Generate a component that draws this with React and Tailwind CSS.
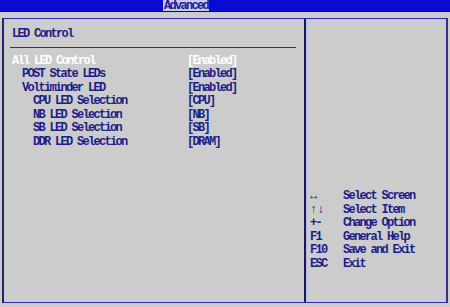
import React from 'react';

const items = [
  { label: 'All LED Control', value: '[Enabled]', indent: 'pl-[8px]', active: true },
  { label: 'POST State LEDs', value: '[Enabled]', indent: 'pl-[18px]' },
  { label: 'Voltiminder LED', value: '[Enabled]', indent: 'pl-[18px]' },
  { label: 'CPU LED Selection', value: '[CPU]', indent: 'pl-[29px]' },
  { label: 'NB LED Selection', value: '[NB]', indent: 'pl-[29px]' },
  { label: 'SB LED Selection', value: '[SB]', indent: 'pl-[29px]' },
  { label: 'DDR LED Selection', value: '[DRAM]', indent: 'pl-[29px]' },
];

const help = [
  ['↔', 'Select Screen', true],
  ['↑↓', 'Select Item', true],
  ['+-', 'Change Option'],
  ['F1', 'General Help'],
  ['F10', 'Save and Exit'],
  ['ESC', 'Exit'],
];

export default function App() {
  return (
    <div
      className="w-[450px] h-[307px] bg-[#cccccc] text-[#1c1c88] font-bold text-[12px] tracking-[-1.7px] leading-[13.5px] overflow-hidden"
      style={{ fontFamily: '"Liberation Mono", "DejaVu Sans Mono", monospace' }}
    >
      {/* top menu bar */}
      <div className="h-[12px] bg-[#0a0ad2] border-b border-[#06067a] flex">
        <div className="ml-[163px] w-[46px] h-full bg-[#c8c8f8] text-[#1a1a90] leading-[12px] pl-[1px]">
          Advanced
        </div>
      </div>

      {/* main frame */}
      <div className="mx-[2px] mt-[6px] h-[285px] border border-[#2a2ab0] border-l-2 border-l-[#202070] border-r-2 border-r-[#3030a0] flex">
        {/* left panel */}
        <div className="w-[302px] flex flex-col border-r-2 border-r-[#1a1a50]">
          <div className="pt-[9px] pl-[8px]">LED Control</div>
          <div className="mt-[5px] ml-[6px] mr-[8px] h-[1px] bg-[#2626c8]" />
          <div className="mt-[7px] flex flex-col">
            {items.map((it) => (
              <div key={it.label} className="flex">
                <div className={`w-[183px] ${it.indent} ${it.active ? 'text-white' : ''}`}>{it.label}</div>
                <div className={it.active ? 'text-white' : ''}>{it.value}</div>
              </div>
            ))}
          </div>
        </div>
        <div className="w-[1px] bg-[#b8b8f0]" />

        {/* right help panel */}
        <div className="flex-1 pt-[171px] pl-[3px] flex flex-col">
          {help.map(([k, d, arrow]) => (
            <div key={k} className="flex">
              <div className={`w-[33px] ${arrow ? 'tracking-[0px]' : ''}`}>{k}</div>
              <div>{d}</div>
            </div>
          ))}
        </div>
      </div>
    </div>
  );
}
